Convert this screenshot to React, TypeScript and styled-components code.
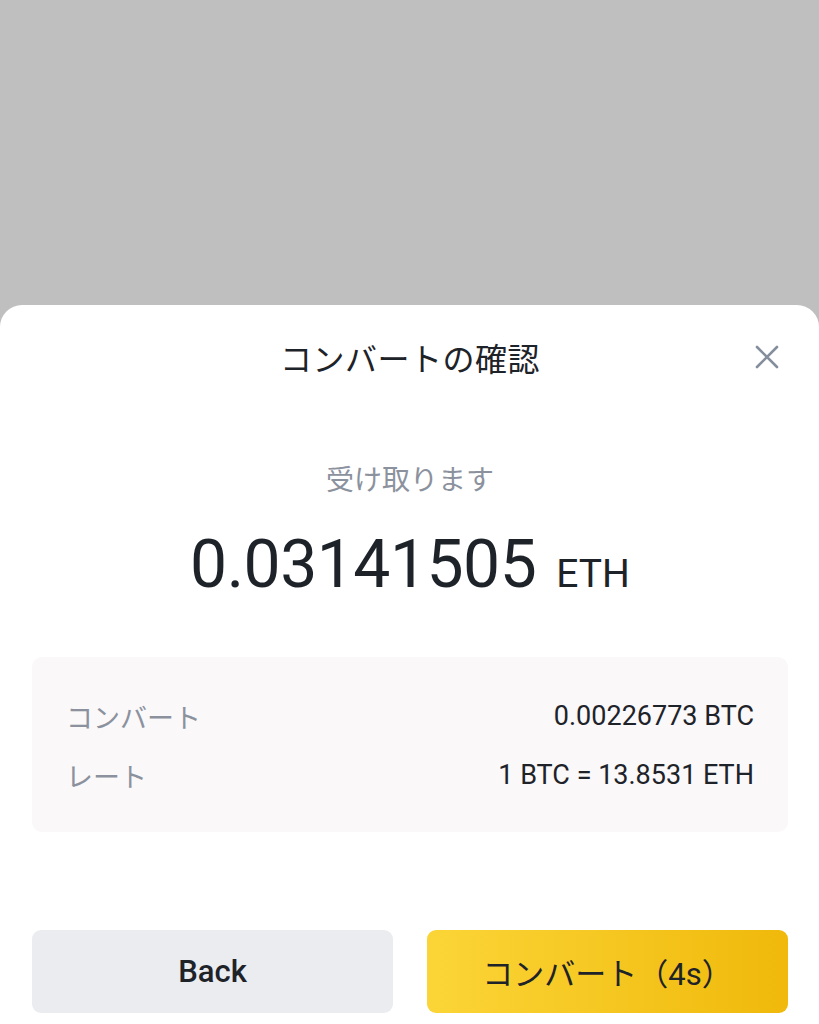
import React from "react";
import styled, { createGlobalStyle } from "styled-components";

const Global = createGlobalStyle`
  html, body { margin: 0; padding: 0; background: #bfbfbf; }
  body { font-family: Roboto, "Noto Sans CJK JP", sans-serif; }
  * { box-sizing: border-box; }
`;

const Page = styled.div`
  width: 819px;
  height: 1024px;
  display: flex;
  flex-direction: column;
  background: #bfbfbf;
  overflow: hidden;
`;

const Backdrop = styled.div`
  height: 305px;
  flex: none;
`;

const Sheet = styled.div`
  flex: 1;
  background: #ffffff;
  border-radius: 22px 22px 0 0;
  display: flex;
  flex-direction: column;
  padding: 0 31px 0 32px;
`;

const Header = styled.div`
  height: 104px;
  display: grid;
  grid-template-columns: 1fr auto 1fr;
  align-items: center;
`;

const Title = styled.div`
  grid-column: 2;
  font-family: "Noto Sans CJK JP", sans-serif;
  font-size: 32px;
  font-weight: 400;
  color: #1e2329;
  line-height: 40px;
  letter-spacing: 0.5px;
`;

const Close = styled.button`
  grid-column: 3;
  justify-self: end;
  margin-right: 5px;
  width: 32px;
  height: 32px;
  padding: 0;
  border: none;
  background: none;
  display: flex;
  align-items: center;
  justify-content: center;
`;

const Subtitle = styled.div`
  margin-top: 49px;
  text-align: center;
  font-family: "Noto Sans CJK JP", sans-serif;
  font-size: 28px;
  line-height: 40px;
  color: #8b929e;
`;

const Amount = styled.div`
  margin-top: 27px;
  height: 80px;
  display: flex;
  align-items: baseline;
  justify-content: center;
  gap: 20px;
  color: #1e2329;
  font-family: Roboto, sans-serif;
`;

const AmountValue = styled.span`
  font-size: 66px;
  line-height: 80px;
  font-weight: 400;
  letter-spacing: -0.5px;
`;

const AmountUnit = styled.span`
  font-size: 39px;
  line-height: 80px;
  font-weight: 400;
`;

const Card = styled.div`
  margin-top: 52px;
  height: 175px;
  background: #faf8f9;
  border-radius: 10px;
  padding: 39px 34px 0 34px;
  display: flex;
  flex-direction: column;
  gap: 19px;
`;

const Row = styled.div`
  height: 40px;
  display: flex;
  align-items: center;
  justify-content: space-between;
`;

const Label = styled.span`
  font-family: "Noto Sans CJK JP", sans-serif;
  font-size: 27px;
  color: #8b929e;
`;

const Value = styled.span`
  font-family: Roboto, sans-serif;
  font-size: 27px;
  color: #1e2329;
`;

const Buttons = styled.div`
  margin-top: 98px;
  display: grid;
  grid-template-columns: 1fr 1fr;
  gap: 34px;
`;

const Button = styled.button<{ $primary?: boolean }>`
  height: 83px;
  border: none;
  border-radius: 9px;
  font-family: Roboto, "Noto Sans CJK JP", sans-serif;
  font-size: 31px;
  font-weight: ${(p) => (p.$primary ? 400 : 500)};
  color: #1e2329;
  background: ${(p) =>
    p.$primary ? "linear-gradient(90deg, #fbd537 0%, #f0b90b 100%)" : "#eaecef"};
`;

export default function App() {
  return (
    <Page>
      <Global />
      <Backdrop />
      <Sheet>
        <Header>
          <Title>コンバートの確認</Title>
          <Close aria-label="close">
            <svg width="26" height="26" viewBox="0 0 26 26">
              <path
                d="M3 3 L23 23 M23 3 L3 23"
                stroke="#848e9c"
                strokeWidth="2.6"
                strokeLinecap="round"
              />
            </svg>
          </Close>
        </Header>
        <Subtitle>受け取ります</Subtitle>
        <Amount>
          <AmountValue>0.03141505</AmountValue>
          <AmountUnit>ETH</AmountUnit>
        </Amount>
        <Card>
          <Row>
            <Label>コンバート</Label>
            <Value>0.00226773 BTC</Value>
          </Row>
          <Row>
            <Label>レート</Label>
            <Value>1 BTC = 13.8531 ETH</Value>
          </Row>
        </Card>
        <Buttons>
          <Button>Back</Button>
          <Button $primary>コンバート（4s）</Button>
        </Buttons>
      </Sheet>
    </Page>
  );
}
